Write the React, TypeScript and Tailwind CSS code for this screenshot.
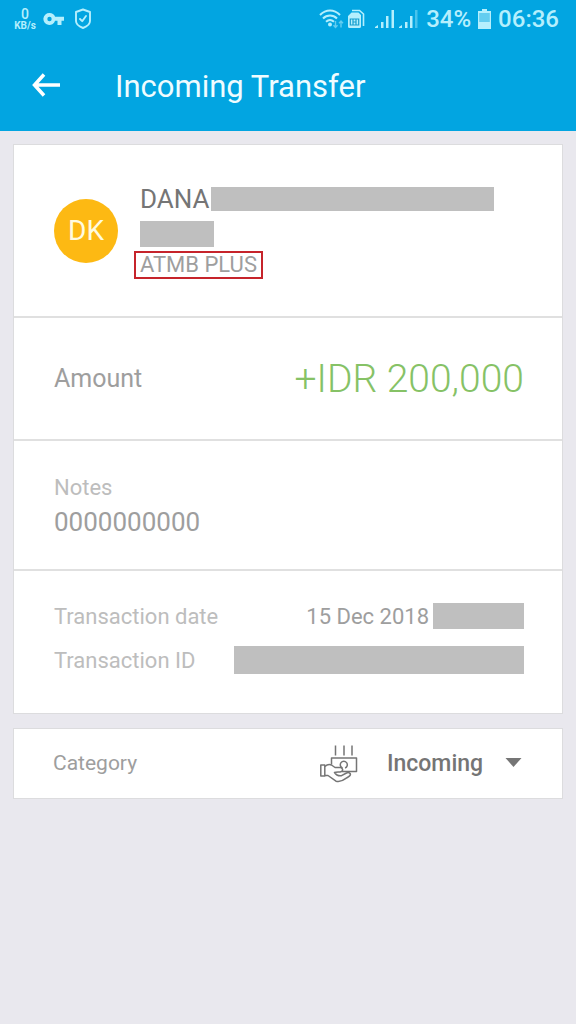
import type { ReactNode } from "react";

const categories = ["Incoming", "Salary", "Refund"];

function Redacted({ className }: { className: string }) {
  return <span aria-hidden="true" className={`block bg-[#bfbfbf] ${className}`} />;
}

function Section({ className, children }: { className: string; children: ReactNode }) {
  return (
    <section className={`border-b-2 border-[#e0e0e0] pl-10 pr-[38px] last:border-b-0 ${className}`}>
      {children}
    </section>
  );
}

function StatusBar() {
  return (
    <div className="flex h-[38px] items-center justify-between pl-[13px] pr-[17px] text-[#b5effd]">
      <div className="flex items-center">
        <div className="flex w-6 flex-col items-center">
          <span className="text-sm font-medium leading-[14px]">0</span>
          <span className="text-[10px] font-bold leading-[10px]">KB/s</span>
        </div>
        <svg className="ml-[6px]" width="22" height="14" viewBox="0 0 22 14" fill="currentColor">
          <path
            fillRule="evenodd"
            d="M6.500 1a6 6 0 1 0 5.600 7.800H14.500V13h4V8.800H21V4.700h-8.900A6 6 0 0 0 6.500 1Zm0 3.800a2.200 2.200 0 1 1 0 4.400 2.200 2.200 0 0 1 0-4.400Z"
          />
        </svg>
        <svg
          className="ml-[9px]"
          width="18"
          height="22"
          viewBox="0 0 18 22"
          fill="none"
          stroke="currentColor"
          strokeWidth="1.9"
          strokeLinejoin="round"
          strokeLinecap="round"
        >
          <path d="M9 1.500 16 4v9c0 3-3 5.500-7 7C5 18.500 2 16 2 13V4Z" />
          <path d="m6 11 2.200 2.200L12 8" />
        </svg>
      </div>

      <div className="flex items-center">
        {/* Wi-Fi with data arrows */}
        <svg width="26" height="20" viewBox="0 0 26 20" fill="none" stroke="currentColor" strokeWidth="2">
          <path d="M1 6C7 0 15 0 21 6" />
          <path d="M4 9.500c4-4 10-4 14 0" />
          <path d="M7 12.800c2.500-2.300 5.500-2.300 8 0" />
          <circle cx="11" cy="15.500" r="2" fill="currentColor" stroke="none" />
          <path
            d="M16.500 12v6.500m-2-2.200 2 2.200 2-2.200M22 18.500V12m-2 2.200 2-2.200 2 2.200"
            strokeWidth="1.400"
            opacity=".55"
          />
        </svg>
        {/* SIM cards */}
        <svg className="ml-[2px]" width="18" height="20" viewBox="0 0 18 20" fill="none">
          <path d="M5 1.500h7.500L16.500 5v12" stroke="currentColor" strokeWidth="1.600" />
          <path d="M1 7l3.500-3.500h7L14 6v11.500a1.500 1.500 0 0 1-1.500 1.500h-10A1.500 1.500 0 0 1 1 17.500Z" fill="currentColor" />
          <path d="M3.300 10h8.400v6H3.300ZM6 10v6M9 10v6M6 13h3" stroke="#179fcf" strokeWidth="1.200" />
        </svg>
        <svg className="ml-[10px]" width="20" height="20" viewBox="0 0 20 20" fill="currentColor">
          <path d="M0 19v-1l3-2v3ZM6 13h2.500v6H6ZM11 7h2.500v12H11ZM16.500 1H19v18h-2.500Z" />
        </svg>
        <svg className="ml-1" width="20" height="20" viewBox="0 0 20 20" fill="currentColor">
          <path d="M0 19v-1l3-2v3ZM6 13h2.500v6H6ZM11 7h2.500v12H11Z" />
          <path d="M16 1h2.500v18H16Z" opacity=".4" />
        </svg>
        <span className="ml-[7px] text-[24px] font-medium leading-6">34%</span>
        <svg className="ml-[7px]" width="13" height="20" viewBox="0 0 13 20" fill="currentColor">
          <path d="M4 0h5v2h4v11H0V2h4Z" opacity=".55" />
          <path d="M4 0h5v2h4v2H0V2h4ZM0 13h13v7H0Z" />
          <path d="M0 2h1.200v11H0ZM11.800 2H13v11h-1.200Z" />
        </svg>
        <span className="ml-[7px] text-[24px] font-medium leading-6">06:36</span>
      </div>
    </div>
  );
}

function CashInHandIcon() {
  return (
    <svg
      width="38"
      height="38"
      viewBox="0 0 38 38"
      fill="none"
      stroke="#757575"
      strokeWidth="1.500"
      strokeLinejoin="round"
      className="shrink-0"
    >
      <path d="M15.500 .5v10M24 .5v10M32 .5v10" />
      <path d="M11.500 19.500V13h25v13.500H22" />
      <path d="M22.500 23a3.500 3.500 0 1 1 2.600 0" />
      <path d="M.8 20h4v11h-4Z" />
      <path d="M4.800 21.500C7 19.500 9.500 19 11.500 20l3.500 2.500h5.500c2.500.5 3 3.500.5 4.200-2 .6-4.500 0-6.500.8 1.500 2.500 4 3.500 7 3.200l5-2.700c2.500-1.200 4.800.5 3.500 2.500-1 1.500-3 2-4.500 3.200-2.500 2-5.500 3.300-9.500 2.500L8 30.500H4.800" />
    </svg>
  );
}

export default function App() {
  return (
    <div className="min-h-screen bg-[#e9e8ee] font-[Roboto,sans-serif] text-[#9e9e9e]">
      <header className="bg-[#02a5e1]">
        <StatusBar />
        <div className="flex h-[93px] items-center pl-[31px]">
          <button type="button" aria-label="Back" className="text-white">
            <svg width="30" height="24" viewBox="0 0 30 24" fill="none" stroke="currentColor" strokeWidth="3.500">
              <path d="M29 12H4M13 1.500 3.500 12 13 22.500" />
            </svg>
          </button>
          <h1 className="pl-[54px] pt-1 text-[31px] leading-9 text-[#effcff]">Incoming Transfer</h1>
        </div>
      </header>

      <main className="flex flex-col gap-[14px] px-[13px] pt-[13px]">
        <div className="border border-[#dcdcde] bg-white">
          <Section className="flex h-[173px] items-center">
            <div className="flex size-16 shrink-0 items-center justify-center rounded-full bg-[#fdb913] text-[28px] text-[#fffbe0]">
              DK
            </div>
            <div className="ml-4 flex flex-1 flex-col items-start">
              <div className="flex w-full items-center gap-px pl-[6px]">
                <span className="text-[26px] leading-8 text-[#757575]">DANA</span>
                <Redacted className="mr-[30px] h-6 flex-1" />
              </div>
              <Redacted className="ml-[6px] mt-[6px] h-[26px] w-[74px]" />
              <span className="mt-1 border-2 border-[#c6242b] px-1 text-[22px] leading-6">ATMB PLUS</span>
            </div>
          </Section>

          <Section className="flex h-[123px] items-center justify-between">
            <span className="text-[25px] leading-8">Amount</span>
            <span className="text-[39px] font-light leading-10 text-[#86c266]">+IDR 200,000</span>
          </Section>

          <Section className="flex h-[130px] flex-col justify-center pt-[2px]">
            <span className="text-[22px] leading-8 text-[#bdbdbd]">Notes</span>
            <span className="text-[26px] leading-9">0000000000</span>
          </Section>

          <Section className="flex flex-col gap-3 pb-[37px] pt-[29px]">
            <div className="flex h-8 items-center justify-between">
              <span className="text-[22px] text-[#bdbdbd]">Transaction date</span>
              <span className="flex items-center gap-1 text-[22px]">
                15 Dec 2018
                <Redacted className="h-[26px] w-[91px]" />
              </span>
            </div>
            <div className="flex h-8 items-center justify-between">
              <span className="text-[22px] text-[#bdbdbd]">Transaction ID</span>
              <Redacted className="h-7 w-[290px]" />
            </div>
          </Section>
        </div>

        <div className="flex h-[71px] items-center border border-[#dcdcde] bg-white px-[39px]">
          <label htmlFor="category" className="flex-1 text-[21px]">
            Category
          </label>
          <CashInHandIcon />
          <div className="relative ml-[29px]">
            <select
              id="category"
              defaultValue="Incoming"
              className="w-[136px] appearance-none bg-transparent text-[23px] font-medium leading-8 text-[#757575]"
            >
              {categories.map((name) => (
                <option key={name}>{name}</option>
              ))}
            </select>
            <svg
              className="pointer-events-none absolute right-px top-[10px]"
              width="17"
              height="9"
              viewBox="0 0 17 9"
              fill="#757575"
            >
              <path d="M.5 0h16l-8 9Z" />
            </svg>
          </div>
        </div>
      </main>
    </div>
  );
}
